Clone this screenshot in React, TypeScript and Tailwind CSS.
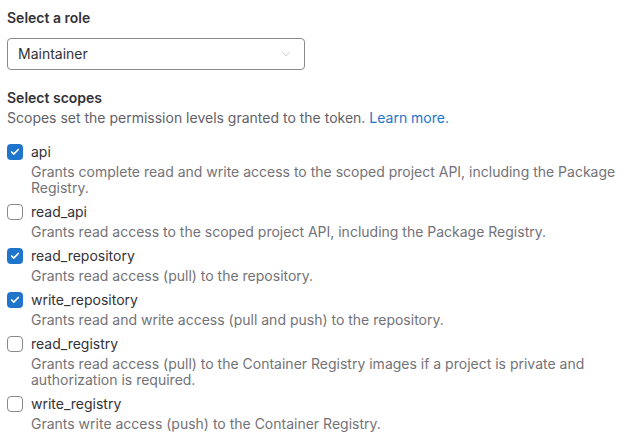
import { Check, ChevronDown } from 'lucide-react';

const scopes = [
  {
    name: 'api',
    checked: true,
    help: 'Grants complete read and write access to the scoped project API, including the Package Registry.',
  },
  {
    name: 'read_api',
    checked: false,
    help: 'Grants read access to the scoped project API, including the Package Registry.',
  },
  {
    name: 'read_repository',
    checked: true,
    help: 'Grants read access (pull) to the repository.',
  },
  {
    name: 'write_repository',
    checked: true,
    help: 'Grants read and write access (pull and push) to the repository.',
  },
  {
    name: 'read_registry',
    checked: false,
    help: 'Grants read access (pull) to the Container Registry images if a project is private and authorization is required.',
  },
  {
    name: 'write_registry',
    checked: false,
    help: 'Grants write access (push) to the Container Registry.',
  },
];

function Checkbox({ checked }: { checked: boolean }) {
  if (checked) {
    return (
      <span className="flex h-4 w-4 shrink-0 items-center justify-center rounded-[4px] bg-[#1f75cb]">
        <Check className="h-2.5 w-2.5 text-white" strokeWidth={4} />
      </span>
    );
  }
  return <span className="h-4 w-4 shrink-0 rounded-[4px] border border-[#89888d] bg-white" />;
}

export default function App() {
  return (
    <div className="min-h-screen bg-white px-[7px] pt-[8px] font-['Inter',sans-serif] text-sm text-[#333238]">
      {/* Role */}
      <div className="mb-[18px]">
        <div className="mb-[10px] font-semibold leading-5">Select a role</div>
        <div className="flex h-8 w-[298px] items-center justify-between rounded-[4px] border border-[#89888d] pl-[10px] pr-[11px]">
          <span className="leading-5">Maintainer</span>
          <ChevronDown className="h-3.5 w-3.5 text-[#bfbfc3]" strokeWidth={1.5} />
        </div>
      </div>

      {/* Scopes */}
      <div className="font-semibold leading-5">Select scopes</div>
      <p className="mb-[14px] leading-5 text-[#626168]">
        Scopes set the permission levels granted to the token.{' '}
        <a className="text-[#1f75cb]">Learn more.</a>
      </p>

      <div className="flex flex-col gap-[6px]">
        {scopes.map((s) => (
          <div key={s.name}>
            <label className="flex items-center gap-2 leading-5">
              <Checkbox checked={s.checked} />
              <span>{s.name}</span>
            </label>
            <p className="mt-[2px] pl-6 leading-4 text-[#737278]">{s.help}</p>
          </div>
        ))}
      </div>
    </div>
  );
}
